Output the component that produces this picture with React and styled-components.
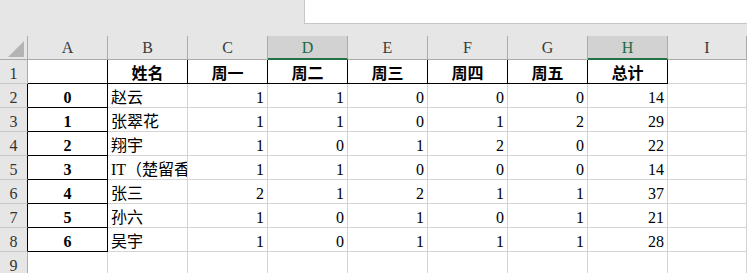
import React from "react";
import styled, { createGlobalStyle } from "styled-components";

const GlobalStyle = createGlobalStyle`
  html, body { margin: 0; padding: 0; background: #ffffff; }
  body { font-family: "Liberation Serif", "Noto Sans CJK SC", serif; overflow: hidden; }
  * { box-sizing: border-box; }
`;

const GRID = "#d4d4d4";
const HEAD_LINE = "#ababab";
const GREEN = "#217346";

const Page = styled.div`
  width: 747px;
  display: flex;
  flex-direction: column;
`;

const Ribbon = styled.div`
  height: 36px;
  background: #e6e6e6;
  display: flex;
  justify-content: flex-end;
  align-items: flex-start;
`;

const FormulaBox = styled.div`
  width: 443px;
  height: 24px;
  background: #ffffff;
  border-left: 1px solid #c6c6c6;
  border-bottom: 1px solid #c6c6c6;
`;

const Sheet = styled.div`
  display: grid;
  grid-template-columns: 28px repeat(8, 80px) 1fr;
  grid-auto-rows: 24px;
  font-size: 16px;
  color: #000;
`;

const Corner = styled.div`
  background: #e6e6e6;
  border-right: 1px solid ${HEAD_LINE};
  border-bottom: 1px solid ${HEAD_LINE};
  display: flex;
  justify-content: flex-end;
  align-items: flex-end;
  padding: 0 3px 2px 0;
`;

const CornerMark = styled.span`
  width: 16px;
  height: 16px;
  background: #b4b4b4;
  clip-path: polygon(100% 0, 100% 100%, 0 100%);
`;

const ColHead = styled.div`
  background: ${(p) => (p.$active ? "#d2d2d2" : "#e6e6e6")};
  color: ${(p) => (p.$active ? "#1e6b41" : "#3a3a3a")};
  border-right: 1px solid ${HEAD_LINE};
  border-bottom: ${(p) => (p.$active ? `2px solid ${GREEN}` : `1px solid ${HEAD_LINE}`)};
  display: flex;
  align-items: center;
  justify-content: center;
  padding-top: ${(p) => (p.$active ? "1px" : "0")};
  line-height: 18px;
`;

const RowHead = styled.div`
  background: #e6e6e6;
  color: #333;
  border-right: 1px solid ${(p) => (p.$strong ? "#000" : HEAD_LINE)};
  border-bottom: 1px solid #c8c8c8;
  display: flex;
  align-items: flex-end;
  justify-content: center;
  line-height: 18px;
`;

const Cell = styled.div`
  border-right: 1px solid ${(p) => (p.$boxRight ? "#000" : GRID)};
  border-bottom: 1px solid ${(p) => (p.$boxBottom ? "#000" : GRID)};
  display: flex;
  align-items: flex-end;
  justify-content: ${(p) =>
    p.$align === "right" ? "flex-end" : p.$align === "center" ? "center" : "flex-start"};
  padding: 0 3px;
  line-height: 18px;
  font-weight: ${(p) => (p.$bold ? 700 : 400)};
  white-space: nowrap;
  overflow: hidden;
`;

const columns = ["A", "B", "C", "D", "E", "F", "G", "H", "I"];
const activeCols = ["D", "H"];
const titles = ["姓名", "周一", "周二", "周三", "周四", "周五", "总计"];

const people = [
  ["赵云", 1, 1, 0, 0, 0, 14],
  ["张翠花", 1, 1, 0, 1, 2, 29],
  ["翔宇", 1, 0, 1, 2, 0, 22],
  ["IT（楚留香）", 1, 1, 0, 0, 0, 14],
  ["张三", 2, 1, 2, 1, 1, 37],
  ["孙六", 1, 0, 1, 0, 1, 21],
  ["吴宇", 1, 0, 1, 1, 1, 28],
];

export default function App() {
  return (
    <Page>
      <GlobalStyle />
      <Ribbon>
        <FormulaBox />
      </Ribbon>
      <Sheet>
        <Corner>
          <CornerMark />
        </Corner>
        {columns.map((c) => (
          <ColHead key={c} $active={activeCols.includes(c)}>
            {c}
          </ColHead>
        ))}

        <RowHead>1</RowHead>
        <Cell $boxRight $boxBottom />
        {titles.map((t) => (
          <Cell key={t} $align="center" $bold $boxRight $boxBottom>
            {t}
          </Cell>
        ))}
        <Cell />

        {people.map(([name, ...nums], i) => (
          <React.Fragment key={name}>
            <RowHead $strong>{i + 2}</RowHead>
            <Cell $align="center" $bold $boxRight $boxBottom>
              {i}
            </Cell>
            <Cell>{name}</Cell>
            {nums.map((n, j) => (
              <Cell key={j} $align="right">
                {n}
              </Cell>
            ))}
            <Cell />
          </React.Fragment>
        ))}

        <RowHead>9</RowHead>
        {columns.map((c) => (
          <Cell key={c} />
        ))}
      </Sheet>
    </Page>
  );
}
